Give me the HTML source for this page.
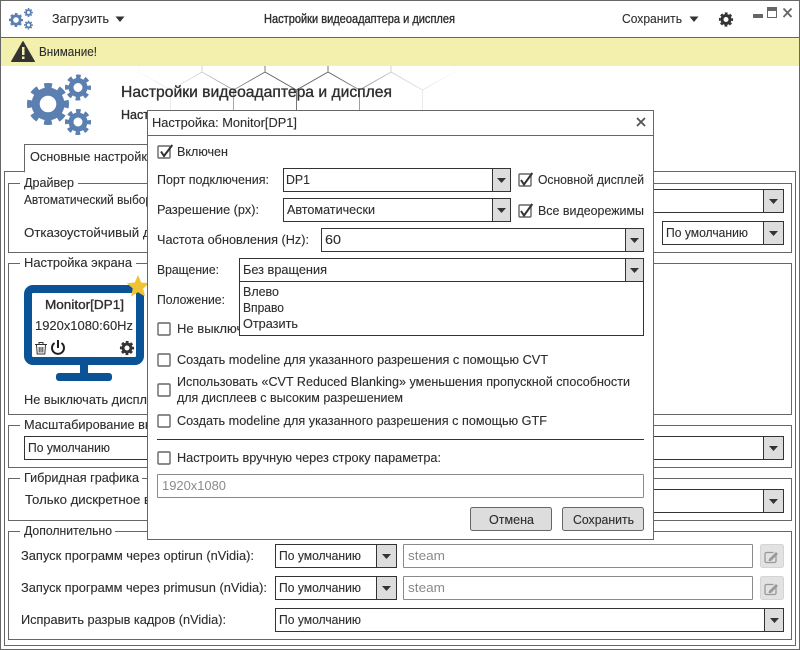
<!DOCTYPE html>
<html><head><meta charset="utf-8"><title>Настройки видеоадаптера и дисплея</title>
<style>
html,body{margin:0;padding:0;background:#fff;width:800px;height:650px;overflow:hidden}
svg{display:block}
text{font-family:"Liberation Sans","DejaVu Sans",sans-serif;font-size:12.5px;fill:#2e2e2e;stroke:#2e2e2e;stroke-width:.12px}
.b{stroke:#2e2e2e;stroke-width:.35px}
text.g{fill:#8a8a8a;stroke:none}
</style></head><body>
<svg width="800" height="650" viewBox="0 0 800 650" xmlns="http://www.w3.org/2000/svg" shape-rendering="crispEdges">
<defs>
<pattern id="hex" patternUnits="userSpaceOnUse" x="202" y="72" width="63" height="108">
<path d="M0 0L31.500 18M63 0L31.500 18M31.500 18V54M31.500 54L0 72M31.500 54L63 72M0 72V108M63 72V108M0-10V0M63-10V0" stroke="#555" stroke-width=".8" fill="none" shape-rendering="auto"/>
</pattern>
<linearGradient id="fade" x1="0" x2="1" y1="0" y2="0">
<stop offset="0" stop-color="#fff" stop-opacity="0"/><stop offset=".2" stop-color="#fff" stop-opacity=".25"/>
<stop offset=".42" stop-color="#fff" stop-opacity="1"/><stop offset=".62" stop-color="#fff" stop-opacity="1"/>
<stop offset=".8" stop-color="#fff" stop-opacity=".3"/><stop offset="1" stop-color="#fff" stop-opacity="0"/>
</linearGradient>
<mask id="m"><rect x="130" y="66" width="330" height="60" fill="url(#fade)"/></mask>
</defs>

<rect x=".5" y=".5" width="799" height="649" fill="#fff" stroke="#666"/>
<line x1="1" x2="799" y1="37.500" y2="37.500" stroke="#666"/>
<rect x="1" y="38" width="798" height="28" fill="#f3efac"/>

<!-- top bar -->
<g shape-rendering="auto" fill="none" stroke="#5a7fb0">
<circle cx="16" cy="20" r="4.200" stroke-width="2.800"/><circle cx="16" cy="20" r="6.200" stroke-width="1.700" stroke-dasharray="2.500 2.370" stroke-dashoffset="1.250"/>
<circle cx="28.500" cy="12.500" r="2.400" stroke-width="1.800"/><circle cx="28.500" cy="12.500" r="3.800" stroke-width="1.300" stroke-dasharray="1.600 1.380" stroke-dashoffset=".8"/>
<circle cx="28.500" cy="25" r="2.400" stroke-width="1.800"/><circle cx="28.500" cy="25" r="3.800" stroke-width="1.300" stroke-dasharray="1.600 1.380" stroke-dashoffset=".8"/>
</g>
<text x="52" y="23" textLength="57" lengthAdjust="spacingAndGlyphs">Загрузить</text>
<path d="M115.500 16.500h9l-4.500 5.500z" fill="#333" shape-rendering="auto"/>
<text x="264" y="23" textLength="191" lengthAdjust="spacingAndGlyphs" class="b">Настройки видеоадаптера и дисплея</text>
<text x="622" y="23" textLength="60" lengthAdjust="spacingAndGlyphs">Сохранить</text>
<path d="M689.500 16.500h9l-4.500 5.500z" fill="#333" shape-rendering="auto"/>
<g shape-rendering="auto" fill="none" stroke="#333">
<circle cx="726" cy="19.500" r="4" stroke-width="3"/><circle cx="726" cy="19.500" r="6.200" stroke-width="1.800" stroke-dasharray="2.800 2.070" stroke-dashoffset="1.400"/>
</g>
<rect x="753" y="14" width="10" height="4" fill="#666"/>
<rect x="767.500" y="7.500" width="9" height="10" fill="#fff" stroke="#666"/><rect x="767" y="7" width="10" height="4" fill="#666"/>
<path d="M783.500 8.500l8 8.500M791.500 8.500l-8 8.500" stroke="#666" stroke-width="1.800" fill="none" shape-rendering="auto"/>

<!-- warning -->
<path d="M23 41.500L34.500 61.500H11.500z" fill="#333" stroke="#333" stroke-linejoin="round" shape-rendering="auto"/>
<rect x="22" y="47" width="2.500" height="8" fill="#f3efac"/><rect x="22" y="56.500" width="2.500" height="2.500" fill="#f3efac"/>
<text x="39" y="56" textLength="58" lengthAdjust="spacingAndGlyphs">Внимание!</text>

<!-- hex background -->
<rect x="130" y="66" width="330" height="60" fill="url(#hex)" mask="url(#m)" shape-rendering="auto"/>

<!-- big gears -->
<g shape-rendering="auto" fill="none" stroke="#5a7fb0">
<circle cx="48" cy="104" r="12.400" stroke-width="8.200"/><circle cx="48" cy="104" r="18.500" stroke-width="5" stroke-dasharray="7.700 6.830" stroke-dashoffset="3.850"/>
<circle cx="78" cy="87.500" r="7" stroke-width="5"/><circle cx="78" cy="87.500" r="11" stroke-width="4" stroke-dasharray="4.600 4.040" stroke-dashoffset="2.300"/>
<circle cx="78" cy="122" r="7" stroke-width="5"/><circle cx="78" cy="122" r="11" stroke-width="4" stroke-dasharray="4.600 4.040" stroke-dashoffset="2.300"/>
</g>
<text x="121" y="97" style="font-size:16px" textLength="271" lengthAdjust="spacingAndGlyphs" class="b">Настройки видеоадаптера и дисплея</text>
<text x="121" y="119" textLength="28" lengthAdjust="spacingAndGlyphs" class="b">Наст</text>

<!-- tab pane -->
<rect x="4.500" y="171.500" width="791" height="474" fill="#fff" stroke="#666"/>
<path d="M24.500 171.500V144.500H160V172H25z" fill="#fff" stroke="#666"/>
<rect x="25" y="170" width="130" height="3" fill="#fff"/>
<text x="30" y="161" textLength="124" lengthAdjust="spacingAndGlyphs">Основные настройки</text>

<!-- groups -->
<g fill="none" stroke="#666">
<rect x="8.500" y="183.500" width="783" height="69"/>
<rect x="8.500" y="263.500" width="783" height="151"/>
<rect x="8.500" y="425.500" width="783" height="42"/>
<rect x="8.500" y="478.500" width="783" height="42"/>
<rect x="8.500" y="531.500" width="783" height="108"/>
</g>
<g fill="#fff">
<rect x="20" y="178" width="58" height="10"/>
<rect x="20" y="258" width="116" height="10"/>
<rect x="20" y="420" width="130" height="10"/>
<rect x="20" y="473" width="122" height="10"/>
<rect x="20" y="526" width="95" height="10"/>
</g>
<text x="24" y="187" textLength="50" lengthAdjust="spacingAndGlyphs">Драйвер</text>
<text x="24" y="267" textLength="108" lengthAdjust="spacingAndGlyphs">Настройка экрана</text>
<text x="24" y="429" textLength="130" lengthAdjust="spacingAndGlyphs">Масштабирование вы</text>
<text x="24" y="482" textLength="115" lengthAdjust="spacingAndGlyphs">Гибридная графика</text>
<text x="24" y="535" textLength="88" lengthAdjust="spacingAndGlyphs">Дополнительно</text>

<text x="24" y="204" textLength="128" lengthAdjust="spacingAndGlyphs">Автоматический выбор</text>
<text x="24" y="237" textLength="134" lengthAdjust="spacingAndGlyphs">Отказоустойчивый др</text>
<text x="24" y="404" textLength="130" lengthAdjust="spacingAndGlyphs">Не выключать диспле</text>
<text x="25" y="504" textLength="126" lengthAdjust="spacingAndGlyphs">Только дискретное в</text>

<!-- monitor -->
<rect x="28" y="289" width="112" height="72" rx="5" fill="#fff" stroke="#0a5396" stroke-width="8" shape-rendering="auto"/>
<rect x="80" y="365" width="8" height="9" fill="#0a5396"/>
<rect x="56" y="373" width="56" height="8" rx="3" fill="#0a5396" shape-rendering="auto"/>
<path d="M138 275l3.200 7.500 8 .7-6 5.300 1.800 8-7-4.200-7 4.200 1.800-8-6-5.300 8-.7z" fill="#f1c232" shape-rendering="auto"/>
<text x="45" y="309" textLength="79" lengthAdjust="spacingAndGlyphs" class="b">Monitor[DP1]</text>
<text x="35" y="330" textLength="98" lengthAdjust="spacingAndGlyphs">1920x1080:60Hz</text>
<g shape-rendering="auto" fill="none">
<path d="M35 344.500h12M39 344.500v-2h4v2M36.500 345l.7 9h7.600l.7-9M39.200 347v5.500M41 347v5.500M42.800 347v5.500" stroke="#333" stroke-width="1"/>
<path d="M54.500 343a6 6 0 1 0 7 0" stroke="#1e1e1e" stroke-width="2"/><path d="M58 340v8" stroke="#1e1e1e" stroke-width="2"/>
<circle cx="127" cy="348" r="4" stroke="#333" stroke-width="3"/><circle cx="127" cy="348" r="6.200" stroke="#333" stroke-width="1.800" stroke-dasharray="2.800 2.070" stroke-dashoffset="1.400"/>
</g>

<!-- main combos -->
<g fill="#fff" stroke="#333">
<rect x="500.500" y="189.500" width="283" height="23"/>
<rect x="662.500" y="221.500" width="121" height="23"/>
<rect x="24.500" y="436.500" width="759" height="23"/>
<rect x="300.500" y="489.500" width="483" height="23"/>
<rect x="275.500" y="544.500" width="121" height="23"/>
<rect x="275.500" y="576.500" width="121" height="23"/>
<rect x="275.500" y="608.500" width="508" height="23"/>
</g>
<g fill="#ddd" stroke="#333">
<rect x="763.500" y="189.500" width="20" height="23"/>
<rect x="763.500" y="221.500" width="20" height="23"/>
<rect x="763.500" y="436.500" width="20" height="23"/>
<rect x="763.500" y="489.500" width="20" height="23"/>
<rect x="376.500" y="544.500" width="20" height="23"/>
<rect x="376.500" y="576.500" width="20" height="23"/>
<rect x="764.500" y="608.500" width="19" height="23"/>
</g>
<g fill="#333" shape-rendering="auto">
<path d="M769 199h9l-4.500 5z"/><path d="M769 231h9l-4.500 5z"/><path d="M769 446h9l-4.500 5z"/><path d="M769 499h9l-4.500 5z"/>
<path d="M382 554h9l-4.500 5z"/><path d="M382 586h9l-4.500 5z"/><path d="M770 618h9l-4.500 5z"/>
</g>
<text x="666" y="237" textLength="82" lengthAdjust="spacingAndGlyphs">По умолчанию</text>
<text x="28" y="452" textLength="82" lengthAdjust="spacingAndGlyphs">По умолчанию</text>
<text x="279" y="560" textLength="82" lengthAdjust="spacingAndGlyphs">По умолчанию</text>
<text x="279" y="592" textLength="82" lengthAdjust="spacingAndGlyphs">По умолчанию</text>
<text x="279" y="624" textLength="82" lengthAdjust="spacingAndGlyphs">По умолчанию</text>
<text x="21" y="560" textLength="233" lengthAdjust="spacingAndGlyphs">Запуск программ через optirun (nVidia):</text>
<text x="21" y="592" textLength="246" lengthAdjust="spacingAndGlyphs">Запуск программ через primusun (nVidia):</text>
<text x="21" y="624" textLength="205" lengthAdjust="spacingAndGlyphs">Исправить разрыв кадров (nVidia):</text>

<g fill="#fff" stroke="#8a8a8a">
<rect x="403.500" y="544.500" width="349" height="23" rx="1"/>
<rect x="403.500" y="576.500" width="349" height="23" rx="1"/>
</g>
<text x="408" y="560" class="g" textLength="37" lengthAdjust="spacingAndGlyphs">steam</text>
<text x="408" y="592" class="g" textLength="37" lengthAdjust="spacingAndGlyphs">steam</text>
<g shape-rendering="auto">
<rect x="760.500" y="544.500" width="23" height="23" rx="2" fill="#e2e2e2" stroke="#d4d4d4"/>
<rect x="760.500" y="576.500" width="23" height="23" rx="2" fill="#e2e2e2" stroke="#d4d4d4"/>
<path d="M776 555.500v5.500a1.500 1.500 0 0 1-1.500 1.500h-8a1.500 1.500 0 0 1-1.500-1.500v-7a1.500 1.500 0 0 1 1.500-1.500h7" fill="none" stroke="#999" stroke-width="1.300"/>
<path d="M769 559l7-7 2 2-7 7h-2.500z" fill="#999"/>
<path d="M776 587.500v5.500a1.500 1.500 0 0 1-1.500 1.500h-8a1.500 1.500 0 0 1-1.500-1.500v-7a1.500 1.500 0 0 1 1.500-1.500h7" fill="none" stroke="#999" stroke-width="1.300"/>
<path d="M769 591l7-7 2 2-7 7h-2.500z" fill="#999"/>
</g>

<!-- dialog -->
<rect x="147.500" y="110.500" width="506" height="429" fill="#fff" stroke="#666"/>
<line x1="148" x2="653" y1="135.500" y2="135.500" stroke="#666"/>
<text x="152" y="127" textLength="145" lengthAdjust="spacingAndGlyphs">Настройка: Monitor[DP1]</text>
<path d="M637 118l8 8M645 118l-8 8" stroke="#555" stroke-width="1.800" fill="none" shape-rendering="auto"/>

<g fill="#fff" stroke="#666" stroke-width="1.400" shape-rendering="auto">
<rect x="158" y="146" width="12" height="12" rx="1"/>
<rect x="519" y="174" width="12" height="12" rx="1"/>
<rect x="519" y="205" width="12" height="12" rx="1"/>
<rect x="158" y="323" width="12" height="12" rx="1"/>
<rect x="158" y="354" width="12" height="12" rx="1"/>
<rect x="158" y="384" width="12" height="12" rx="1"/>
<rect x="158" y="415" width="12" height="12" rx="1"/>
<rect x="158" y="452" width="12" height="12" rx="1"/>
</g>
<g fill="none" stroke="#333" stroke-width="2" shape-rendering="auto">
<path d="M161 151.500l3 4.500 8.300-11"/>
<path d="M521 180l3 4.500 8.300-11.500"/>
<path d="M521 211l3 4.500 8.300-11.500"/>
</g>
<text x="177" y="156" textLength="51" lengthAdjust="spacingAndGlyphs">Включен</text>
<text x="538" y="184" textLength="106" lengthAdjust="spacingAndGlyphs">Основной дисплей</text>
<text x="538" y="215" textLength="106" lengthAdjust="spacingAndGlyphs">Все видеорежимы</text>
<text x="157" y="184" textLength="112" lengthAdjust="spacingAndGlyphs">Порт подключения:</text>
<text x="157" y="214" textLength="102" lengthAdjust="spacingAndGlyphs">Разрешение (px):</text>
<text x="157" y="244" textLength="152" lengthAdjust="spacingAndGlyphs">Частота обновления (Hz):</text>
<text x="157" y="274" textLength="62" lengthAdjust="spacingAndGlyphs">Вращение:</text>
<text x="157" y="304" textLength="68" lengthAdjust="spacingAndGlyphs">Положение:</text>
<text x="177" y="333" textLength="86" lengthAdjust="spacingAndGlyphs">Не выключать</text>

<g fill="#fff" stroke="#333">
<rect x="283.500" y="168.500" width="227" height="23"/>
<rect x="283.500" y="198.500" width="227" height="23"/>
<rect x="321.500" y="228.500" width="322" height="23"/>
<rect x="239.500" y="281.500" width="404" height="54"/>
<rect x="239.500" y="258.500" width="404" height="23"/>
</g>
<g fill="#ddd" stroke="#333">
<rect x="492.500" y="168.500" width="18" height="23"/>
<rect x="492.500" y="198.500" width="18" height="23"/>
<rect x="625.500" y="228.500" width="18" height="23"/>
<rect x="625.500" y="258.500" width="18" height="23"/>
</g>
<g fill="#333" shape-rendering="auto">
<path d="M497 178h9l-4.500 5z"/><path d="M497 208h9l-4.500 5z"/><path d="M630 238h9l-4.500 5z"/><path d="M630 268h9l-4.500 5z"/>
</g>
<text x="286" y="184" textLength="24" lengthAdjust="spacingAndGlyphs">DP1</text>
<text x="287" y="214" textLength="88" lengthAdjust="spacingAndGlyphs">Автоматически</text>
<text x="325" y="244" textLength="16" lengthAdjust="spacingAndGlyphs">60</text>
<text x="243" y="274" textLength="84" lengthAdjust="spacingAndGlyphs">Без вращения</text>
<text x="243" y="296" textLength="36" lengthAdjust="spacingAndGlyphs">Влево</text>
<text x="243" y="312" textLength="41" lengthAdjust="spacingAndGlyphs">Вправо</text>
<text x="243" y="328" textLength="55" lengthAdjust="spacingAndGlyphs">Отразить</text>

<text x="177" y="364" textLength="371" lengthAdjust="spacingAndGlyphs">Создать modeline для указанного разрешения с помощью CVT</text>
<text x="177" y="386" textLength="453" lengthAdjust="spacingAndGlyphs">Использовать «CVT Reduced Blanking» уменьшения пропускной способности</text>
<text x="177" y="402" textLength="226" lengthAdjust="spacingAndGlyphs">для дисплеев с высоким разрешением</text>
<text x="177" y="425" textLength="370" lengthAdjust="spacingAndGlyphs">Создать modeline для указанного разрешения с помощью GTF</text>
<line x1="157" x2="644" y1="439.500" y2="439.500" stroke="#333"/>
<text x="177" y="462" textLength="264" lengthAdjust="spacingAndGlyphs">Настроить вручную через строку параметра:</text>
<rect x="157.500" y="474.500" width="486" height="23" rx="1" fill="#fff" stroke="#8a8a8a"/>
<text x="162" y="490" class="g" textLength="64" lengthAdjust="spacingAndGlyphs">1920x1080</text>

<g fill="#ddd" stroke="#666" shape-rendering="auto">
<rect x="470.500" y="507.500" width="81" height="23" rx="2"/>
<rect x="562.500" y="507.500" width="81" height="23" rx="2"/>
</g>
<text x="489" y="524" textLength="45" lengthAdjust="spacingAndGlyphs">Отмена</text>
<text x="573" y="524" textLength="61" lengthAdjust="spacingAndGlyphs">Сохранить</text>
</svg>
</body></html>
